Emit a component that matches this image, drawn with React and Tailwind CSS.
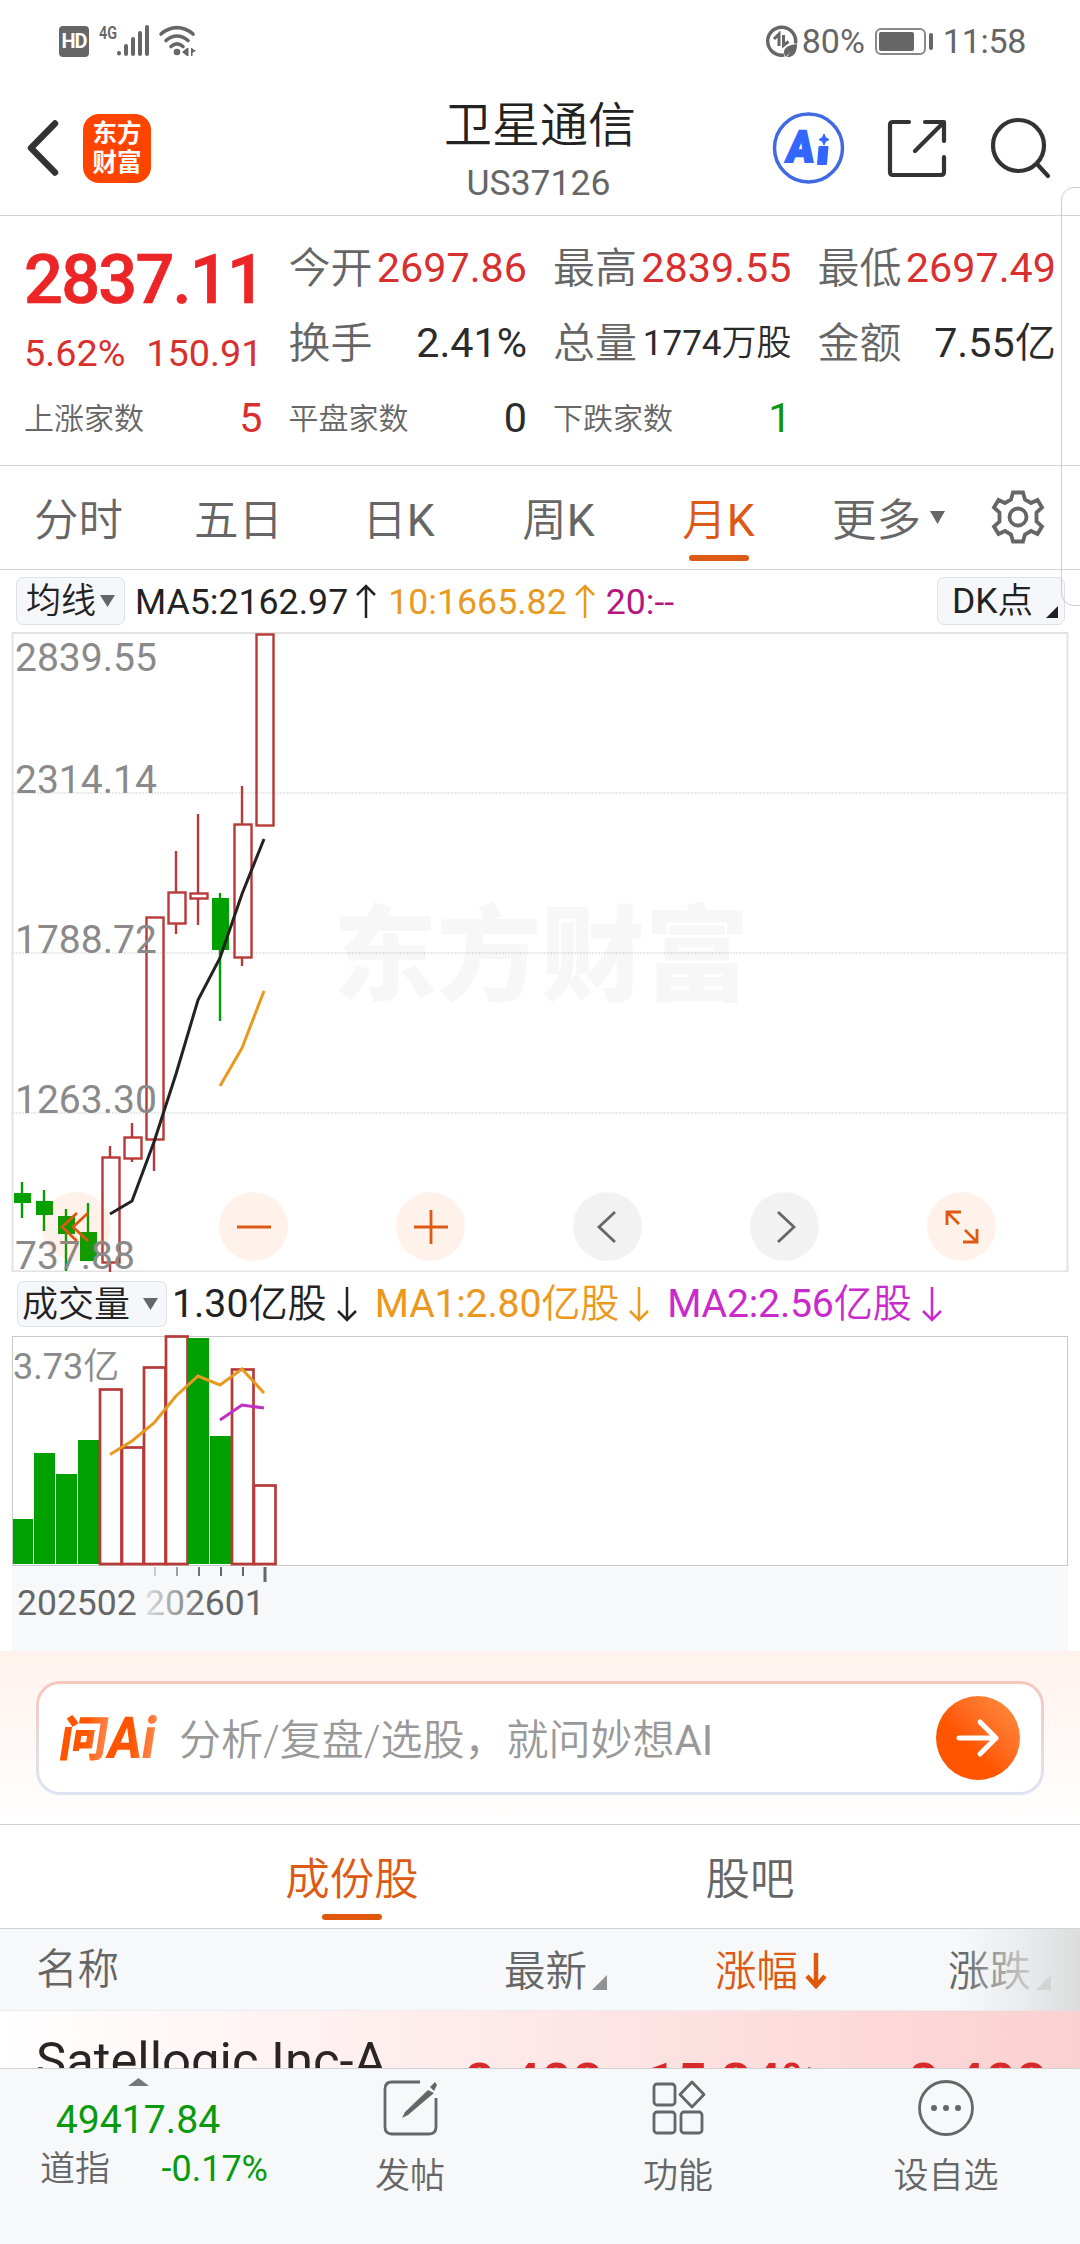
import React from 'react';

const RED = '#b83a38';
const GREEN = '#00a000';

// x = centre of the candle, wick = [high, low], body = [top, bottom]
const candles = [
    { x: 22, up: false, wick: [1182, 1218], body: [1193, 1203] },
    { x: 44, up: false, wick: [1190, 1231], body: [1201, 1215] },
    { x: 66, up: false, wick: [1209, 1271], body: [1216, 1234] },
    { x: 88, up: false, wick: [1203, 1261], body: [1232, 1261] },
    { x: 110, up: true, wick: [1146, 1272], body: [1157, 1262] },
    { x: 132, up: true, wick: [1123, 1162], body: [1137, 1158] },
    { x: 154, up: true, wick: [917, 1171], body: [917, 1139] },
    { x: 176, up: true, wick: [851, 934], body: [892, 923] },
    { x: 198, up: true, wick: [814, 925], body: [893, 898] },
    { x: 220, up: false, wick: [893, 1021], body: [898, 950] },
    { x: 242, up: true, wick: [786, 966], body: [824, 957] },
    { x: 264, up: true, wick: [634, 825], body: [634, 825] },
];

const volumes = [
    { up: false, top: 1519 },
    { up: false, top: 1453 },
    { up: false, top: 1474 },
    { up: false, top: 1440 },
    { up: true, top: 1388 },
    { up: true, top: 1446 },
    { up: true, top: 1366 },
    { up: true, top: 1335 },
    { up: false, top: 1338 },
    { up: false, top: 1436 },
    { up: true, top: 1368 },
    { up: true, top: 1484 },
];

const priceLabels = [
    { text: '2839.55', y: 671 },
    { text: '2314.14', y: 793 },
    { text: '1788.72', y: 953 },
    { text: '1263.30', y: 1113 },
    { text: '737.88', y: 1269 },
];

const tabs = [
    { name: '分时' },
    { name: '五日' },
    { name: '日', k: true },
    { name: '周', k: true },
    { name: '月', k: true, active: true },
];

const StatusBar = () => (
    <div className="h-[82px] flex items-center justify-between pl-[59px] pr-[54px] text-[#666]">
        <div className="flex items-center">
            <div className="w-[30px] h-[31px] rounded-[4px] bg-[#666] text-white text-[20px] font-bold flex items-center justify-center leading-none tracking-[-1px]">
                HD
            </div>
            <svg className="ml-[8px] overflow-visible" width="100" height="40" viewBox="97 21 100 40" fill="none">
                <text x="99" y="38.500" fontSize="19" fontWeight="600" fill="#666" textLength="18" lengthAdjust="spacingAndGlyphs">4G</text>
                <g stroke="#666" strokeWidth="4" strokeLinecap="round">
                    <path d="M119 53v.5M126 46v8M133 39v15M140 33v21M147 27v27" />
                </g>
                <g stroke="#666" strokeWidth="3.600" strokeLinecap="round">
                    <path d="M161 34c10-8.500 22-8.500 32 0M166 40.500c7-6 15-6 22 0M171 46.500c4-3.500 8-3.500 12 0" />
                </g>
                <circle cx="177" cy="52" r="3.300" fill="#666" />
                <path d="M182 52l5-4v8zM186.500 48h2v8h-2zM191 48h1.500v1l3.500 1.500-3.500 2.500v3H191z" fill="#666" />
            </svg>
        </div>
        <div className="flex items-center text-[34px] leading-none">
            <svg width="32" height="32" viewBox="0 0 32 32" fill="none">
                <path d="M29.500 18.500A14 14 0 1 0 18 30" stroke="#666" strokeWidth="3.400" />
                <path d="M8 14l5-5v12M17.500 10v10.500l5-4" stroke="#666" strokeWidth="3" />
                <path d="M31 19c-8 1-13 3-13 8.500 0 1.500.5 3 1.500 4.500l5-5-4 5.500C28 32 31 28 31 19z" fill="#666" />
            </svg>
            <span className="ml-[4px]">80%</span>
            <div className="ml-[10px] w-[51px] h-[27px] border-2 border-[#888] rounded-[6px] p-[2px]">
                <div className="h-full w-[35px] rounded-[2px] bg-[#666]" />
            </div>
            <div className="ml-[3px] w-[4px] h-[17px] rounded-[2px] bg-[#666]" />
            <span className="ml-[10px] tracking-[-0.300px]">11:58</span>
        </div>
    </div>
);

const NavBar = () => (
    <div className="h-[134px] flex items-center justify-between border-b border-[#d4d4d4] pl-[25px] pr-[28px] pb-px">
        <div className="flex items-center w-[250px]">
            <svg width="36" height="58" viewBox="0 0 36 58" fill="none" stroke="#333" strokeWidth="6.500" strokeLinecap="round" strokeLinejoin="round">
                <path d="M30 4.500L6 29l24 24.500" />
            </svg>
            <div className="ml-[22px] w-[68px] h-[69px] rounded-[16px] bg-[#ff4400] text-white text-[24.500px] font-bold leading-[29px] text-center pt-[5px]">
                东方<br />财富
            </div>
        </div>
        <div className="text-center pt-[4px] pl-[3px]">
            <div className="text-[48px] leading-[56px] font-[350] text-[#222]">卫星通信</div>
            <div className="text-[35.500px] leading-[40px] mt-[9px] text-[#666] -ml-[3px]">US37126</div>
        </div>
        <svg width="250" height="74" viewBox="802 111 250 74" className="overflow-visible" fill="none">
            <circle cx="808.500" cy="148" r="34" stroke="#4169e1" strokeWidth="3.500" />
            <g fill="#3366ff">
                <text x="0" y="0" fontSize="44" fontWeight="900" stroke="#3366ff" strokeWidth="2" transform="translate(785 162) skewX(-7) scale(0.92 1)">A</text>
                <path d="M819.500 147h8l-1.500 17h-8z" strokeWidth="2" strokeLinejoin="round" stroke="#3366ff" />
                <path d="M824 134l1.500 3.500 3.500 2-3.500 2-1.500 3.500-1.500-3.500-3.500-2 3.500-2z" stroke="#3366ff" />
            </g>
            <g stroke="#333" strokeWidth="4.200" strokeLinecap="round" strokeLinejoin="round">
                <path d="M909 122h-16q-3 0-3 3v47q0 3 3 3h48q3 0 3-3v-15M925 122h19v19M943 123l-28 28" />
                <circle cx="1018.500" cy="145.500" r="25.500" />
                <path d="M1037 164l11 12" />
            </g>
        </svg>
    </div>
);

const Stat = ({ label, value, color = 'text-[#2b2b2b]', small = false }) => (
    <div className="flex items-center justify-between whitespace-nowrap leading-none">
        <span className={small ? 'text-[30px] font-[350] text-[#666]' : 'text-[42px] font-[350] text-[#666]'}>{label}</span>
        <span className={color}>{value}</span>
    </div>
);

const Quote = () => (
    <div className="h-[250px] border-b border-[#d4d4d4] pt-[15px] px-[24px]">
        <div className="grid grid-cols-4 grid-rows-3 h-[225px] gap-x-[26px] text-[41.300px]">
            <div className="row-span-2 leading-none text-[#d8302f]">
                <div className="text-[68.500px] font-medium text-[#ec2527] tracking-[-1.800px] mt-[15px] [-webkit-text-stroke:0.700px_#ec2527]">2837.11</div>
                <div className="flex justify-between text-[37.800px] mt-[20px]">
                    <span>5.62%</span>
                    <span>150.91</span>
                </div>
            </div>
            <Stat label="今开" value="2697.86" color="text-[#d8302f]" />
            <Stat label="最高" value="2839.55" color="text-[#d8302f]" />
            <Stat label="最低" value="2697.49" color="text-[#d8302f]" />
            <Stat label="换手" value="2.41%" />
            <Stat label="总量" value={<>1774<span className="font-[350]">万股</span></>} color="text-[35px] text-[#2b2b2b]" />
            <Stat label="金额" value={<>7.55<span className="font-[350]">亿</span></>} />
            <Stat label="上涨家数" value="5" color="text-[#d8302f]" small />
            <Stat label="平盘家数" value="0" small />
            <Stat label="下跌家数" value="1" color="text-[#0f960f]" small />
        </div>
    </div>
);

const PeriodTabs = () => (
    <div className="h-[104px] flex border-b border-[#d4d4d4] text-[44.500px] leading-none font-[350] text-[#666] pr-px">
        {tabs.map((tab) => (
            <div key={tab.name} className={`w-[160px] flex flex-col items-center pt-[33px] pr-[3px] ${tab.active ? 'text-[#dc5a14]' : ''}`}>
                <span className="h-[44px]">{tab.name}{tab.k && <span className="font-normal">K</span>}</span>
                {tab.active && <div className="mt-[12px] w-[60px] h-[6px] rounded-full bg-[#dc5a14]" />}
            </div>
        ))}
        <div className="w-[177px] flex justify-center gap-[9px] pt-[33px]">
            <span>更多</span>
            <svg className="mt-[12px]" width="15" height="13" viewBox="0 0 15 13"><path d="M0 0h15l-7.500 13z" fill="#666" /></svg>
        </div>
        <svg className="ml-[14px] mt-[24px]" width="54" height="54" viewBox="-27 -27 54 54" fill="none" stroke="#666" strokeWidth="3.800">
            <circle r="8.500" />
            <path d="M-5 -24.500H5L7 -17.500L13 -14L19.500 -17L24 -9.500L18.500 -4.500V4.500L24 9.500L19.500 17L13 14L7 17.500L5 24.500H-5L-7 17.500L-13 14L-19.500 17L-24 9.500L-18.500 4.500V-4.500L-24 -9.500L-19.500 -17L-13 -14L-7 -17.500Z" />
        </svg>
    </div>
);

const Arrow = ({ down = false, className }) => (
    <svg className={className} width="20" height="36" viewBox="0 0 20 36" fill="none" stroke="currentColor" strokeWidth="2.500">
        <path d={down ? 'M10 1v33M1 25l9 9 9-9' : 'M10 35V3M1 12l9-9 9 9'} />
    </svg>
);

const Caret = () => (
    <svg width="15" height="12" viewBox="0 0 15 12"><path d="M0 0h15l-7.500 12z" fill="#666" /></svg>
);

const MaBar = () => (
    <div className="h-[62px] flex items-center pl-[16px] pr-[15px] text-[35.700px] leading-none whitespace-nowrap">
        <div className="w-[109px] h-[48px] rounded-[7px] border border-[#dde1e6] bg-[#f6f7fa] flex items-center pl-[9px] gap-[4px] text-[35px] text-[#222]">
            <span className="font-[350] pt-px">均线</span>
            <Caret />
        </div>
        <span className="ml-[10px] pt-[3px] text-[#222]">MA5:2162.97</span>
        <Arrow className="ml-[8px] text-[#222]" />
        <span className="ml-[12px] pt-[3px] text-[#e8991f]">10:1665.82</span>
        <Arrow className="ml-[8px] text-[#e8991f]" />
        <span className="ml-[11px] pt-[3px] text-[#b5177f]">20:--</span>
        <div className="ml-auto w-[128px] h-[48px] rounded-[7px] border border-[#dde1e6] bg-[#f6f7fa] flex items-center justify-between pl-[14px] pr-[6px] text-[35.500px] text-[#222]">
            <span className="pt-[2px]">DK<span className="font-[350]">点</span></span>
            <svg className="mt-[22px]" width="12" height="12" viewBox="0 0 12 12"><path d="M12 0v12H0z" fill="#222" /></svg>
        </div>
    </div>
);

const RoundButton = ({ gray = false, children }) => (
    <div className={`w-[69px] h-[69px] rounded-full flex items-center justify-center ${gray ? 'bg-black/5 text-[#666]' : 'bg-[#ff5500]/8 text-[#dc5a14]'}`}>
        <svg width="36" height="36" viewBox="-18 -18 36 36" fill="none" stroke="currentColor" strokeWidth="2.800">
            {children}
        </svg>
    </div>
);

const PriceChart = () => (
    <div className="relative h-[640px]">
        <svg className="block" width="1080" height="640" viewBox="0 632 1080 640">
            <g stroke="#e4e4e4" strokeWidth="1.500" strokeDasharray="2 1">
                <path d="M13 793H1067M13 953H1067M13 1113H1067" />
            </g>
            <text x="333" y="993" fontSize="104" fontWeight="900" fill="#000" opacity="0.028">东方财富</text>
            <rect x="12.500" y="633" width="1055" height="638.500" fill="none" stroke="#e3e3e3" strokeWidth="2" />
            {candles.map((c) => (
                <g key={c.x}>
                    <path
                        d={c.up
                            ? `M${c.x} ${c.wick[0]}V${c.body[0]}M${c.x} ${c.body[1]}V${c.wick[1]}`
                            : `M${c.x} ${c.wick[0]}V${c.wick[1]}`}
                        stroke={c.up ? RED : GREEN}
                        strokeWidth="2.400"
                    />
                    <rect
                        x={c.up ? c.x - 7.5 : c.x - 8}
                        y={c.up ? c.body[0] + 0.5 : c.body[0]}
                        width="17"
                        height={c.body[1] - c.body[0]}
                        fill={c.up ? 'none' : GREEN}
                        stroke={c.up ? RED : 'none'}
                        strokeWidth="2.400"
                    />
                </g>
            ))}
            <path d="M110 1214L132 1201L154 1142L176 1074L198 1000L220 958L242 894L264 839" fill="none" stroke="#222" strokeWidth="3" />
            <path d="M220 1086L242 1048L264 991" fill="none" stroke="#e8991f" strokeWidth="3" />
            {priceLabels.map((l) => (
                <text key={l.text} x="15" y={l.y} fontSize="39" fill="#8a8a8a">{l.text}</text>
            ))}
        </svg>
        <div className="absolute left-[42px] top-[560px] w-[954px] flex justify-between">
            <RoundButton><path d="M0 -14L-15 0L0 14M11 -14L-4 0L11 14" /></RoundButton>
            <RoundButton><path d="M-17 0H17" /></RoundButton>
            <RoundButton><path d="M-17 0H17M0 -17V17" /></RoundButton>
            <RoundButton gray><path d="M7 -15L-9 0L7 15" /></RoundButton>
            <RoundButton gray><path d="M-7 -15L9 0L-7 15" /></RoundButton>
            <RoundButton><path d="M-1 -15H-15V-2M-15 -15L-3 -3M1 15H15V2M15 15L3 3" /></RoundButton>
        </div>
    </div>
);

const VolumeBar = () => (
    <div className="h-[63px] flex items-center pl-[17px] pt-px text-[39.200px] leading-none whitespace-nowrap">
        <div className="w-[150px] h-[46px] rounded-[7px] border border-[#dde1e6] bg-[#f6f7fa] flex items-center justify-between pl-[4px] pr-[8px] text-[36px] font-[350] text-[#222]">
            <span className="pt-[2px]">成交量</span>
            <Caret />
        </div>
        <span className="ml-[5px] pt-[2px] text-[#222]">1.30<span className="font-[350]">亿股</span></span>
        <Arrow down className="ml-[10px] text-[#222]" />
        <span className="ml-[18px] pt-[2px] text-[#eb981c] tracking-[-0.200px]">MA1:2.80<span className="font-[350]">亿股</span></span>
        <Arrow down className="ml-[10px] text-[#eb981c]" />
        <span className="ml-[18px] pt-[2px] text-[#c92bcb] tracking-[-0.200px]">MA2:2.56<span className="font-[350]">亿股</span></span>
        <Arrow down className="ml-[10px] text-[#c92bcb]" />
    </div>
);

const VolumeChart = () => (
    <svg className="block" width="1080" height="316" viewBox="0 1335 1080 316">
        <defs>
            <linearGradient id="dateFade" gradientUnits="userSpaceOnUse" x1="140" x2="205" y1="0" y2="0">
                <stop offset="0" stopColor="#666" stopOpacity="0.1" />
                <stop offset="1" stopColor="#666" />
            </linearGradient>
        </defs>
        <rect x="12" y="1567" width="1056" height="84" fill="#f7f8fa" />
        <rect x="12.500" y="1336.500" width="1055" height="229" fill="none" stroke="#c9c9c9" />
        <text x="13" y="1379" fontSize="36" fill="#8a8a8a">3.73<tspan fontWeight="350">亿</tspan></text>
        {volumes.map((v, i) => (
            v.up
                ? <rect key={i} x={i * 22 + 12} y={v.top + 1.5} width="21.500" height={1562.5 - v.top} fill="#fff" stroke={RED} strokeWidth="2.700" />
                : <rect key={i} x={i * 22 + (i ? 12 : 13)} y={v.top} width={i ? 21 : 20} height={1564 - v.top} fill={GREEN} />
        ))}
        <path d="M110 1454.500L132 1441L154 1423L176 1396L198 1376L220 1385L242 1369L264 1393" fill="none" stroke="#e8991f" strokeWidth="3" />
        <path d="M220 1420L242 1405L264 1408" fill="none" stroke="#c22fc4" strokeWidth="3" />
        <g fill="url(#dateFade)">
            <path d="M154 1567h2v9h-2zM176 1567h2v9h-2zM198 1567h2v9h-2zM220 1567h2v9h-2zM242 1567h2v9h-2zM263.500 1567h3v15h-3z" />
            <text x="145" y="1615" fontSize="35.500">202601</text>
        </g>
        <text x="17" y="1615" fontSize="35.500" fill="#666">202502</text>
    </svg>
);

const AskAi = () => (
    <div className="h-[174px] border-b border-[#d4d4d4] bg-linear-to-b from-[#fff2ed] to-white pt-[30px] px-[36px]">
        <div className="h-[114px] rounded-[24px] bg-linear-to-b from-[#f5c6bd] to-[#dde5f3] p-[3px]">
            <div className="h-full rounded-[21px] bg-white flex items-center pl-[20px] pr-[21px]">
                <svg className="overflow-visible" width="100" height="60" viewBox="0 -7 100 60">
                    <defs>
                        <linearGradient id="askFill" x1="0" x2="1" y1="0" y2="0">
                            <stop offset="0.500" stopColor="#ff5500" />
                            <stop offset="1" stopColor="#ff8a50" />
                        </linearGradient>
                    </defs>
                    <g fill="url(#askFill)" transform="skewX(-9)">
                        <text x="5" y="41" fontSize="48" fontWeight="900">问</text>
                        <text x="53" y="43" fontSize="58" fontWeight="800" textLength="48" lengthAdjust="spacingAndGlyphs">Ai</text>
                    </g>
                </svg>
                <span className="ml-[20px] pt-[5px] text-[42px] leading-none font-[350] text-[#999] whitespace-nowrap">分析/复盘/选股，就问妙想<span className="font-normal">AI</span></span>
                <div className="ml-auto w-[84px] h-[84px] rounded-full bg-linear-to-tr from-[#ff5500] from-40% to-[#ff9040] flex items-center justify-center">
                    <svg width="44" height="40" viewBox="0 0 44 40" fill="none" stroke="#fff" strokeWidth="5" strokeLinecap="round" strokeLinejoin="round">
                        <path d="M3 20h37M24 4l16 16-16 16" />
                    </svg>
                </div>
            </div>
        </div>
    </div>
);

const Corner = () => (
    <svg className="mt-[22px] ml-[5px]" width="15" height="15" viewBox="0 0 15 15"><path d="M15 0v15H0z" fill="#929292" /></svg>
);

const Constituents = () => (
    <>
        <div className="h-[104px] flex border-b border-[#d0d3d6] text-[44.500px] leading-none font-[350] pl-[153px] pr-[131px]">
            <div className="flex-1 flex flex-col items-center pt-[33px] text-[#dc5a14]">
                <span className="h-[44px]">成份股</span>
                <div className="mt-[12px] w-[60px] h-[6px] rounded-[3px] bg-[#e0580c]" />
            </div>
            <div className="flex-1 flex flex-col items-center pt-[33px] text-[#666]">股吧</div>
        </div>
        <div className="relative h-[82px] flex items-center bg-[#f6f8fa] border-b border-[#ececee] pl-[36px] text-[41.500px] leading-none font-[350] text-[#666]">
            <span className="w-[468px]">名称</span>
            <div className="w-[211px] flex items-center pt-[4px]">最新<Corner /></div>
            <div className="w-[233px] flex items-center pt-[4px] text-[#dc5a14]">
                涨幅
                <svg className="ml-[7px] -mt-[2px]" width="22" height="36" viewBox="0 0 22 36" fill="none" stroke="#e0580c" strokeWidth="4.500">
                    <path d="M11 0v33M2 23l9 10 9-10" />
                </svg>
            </div>
            <div className="flex items-center pt-[4px]">涨跌<Corner /></div>
            <div className="absolute right-0 top-0 w-[120px] h-[82px] bg-linear-to-r from-[#f6f8fa]/0 via-[#e6e7e8]/70 to-[#dcdcdc]" />
        </div>
        <div className="h-[57px] overflow-hidden flex bg-linear-to-r from-white to-[#fbd0d0] text-[54.500px] leading-none pl-[36px] whitespace-nowrap">
            <span className="w-[428px] pt-[25px] text-[50.800px] text-[#2b2424]">Satellogic Inc-A</span>
            <span className="w-[182px] pt-[44px] font-medium text-[#d8282a]">8.408</span>
            <span className="w-[262px] pt-[44px] font-medium text-[#d8282a] tracking-[-0.800px]">15.34%</span>
            <span className="pt-[44px] font-medium text-[#d8282a]">8.408</span>
        </div>
    </>
);

const NavItem = ({ label, children }) => (
    <div className="flex-1 flex flex-col items-center pt-[9px] text-[35px] leading-none font-[350] text-[#666]">
        <svg width="60" height="60" viewBox="-30 -30 60 60" fill="none" stroke="#666" strokeWidth="2.800" strokeLinejoin="round">
            {children}
        </svg>
        <span className="mt-[21px]">{label}</span>
    </div>
);

const BottomBar = () => (
    <div className="h-[176px] flex bg-[#f6f8fa] border-t border-[#d0d3d6]">
        <div className="w-[276px] pt-[9px] leading-none text-[#0a9a10]">
            <svg className="block ml-[128px]" width="21" height="8" viewBox="0 0 21 8"><path d="M10.500 0L21 8H0z" fill="#777" /></svg>
            <div className="text-center text-[39.200px] mt-[15px]">49417.84</div>
            <div className="flex items-center justify-between pl-[40px] pr-[8px] mt-[11px]">
                <span className="text-[35px] font-[350] text-[#666]">道指</span>
                <span className="text-[36px]">-0.17%</span>
            </div>
        </div>
        <NavItem label="发帖">
            <path d="M10 -26H-18q-7 0-7 7V19q0 7 7 7H19q7 0 7-7V-10" />
            <path d="M18 -18L-5 4l-3 6 6-3L24 -15zM20 -21l5-5 2 3-3 6z" fill="#666" stroke="none" />
        </NavItem>
        <NavItem label="功能">
            <rect x="-24" y="-24" width="21" height="21" rx="3" />
            <rect x="-24" y="4" width="21" height="21" rx="3" />
            <rect x="3" y="4" width="21" height="21" rx="3" />
            <path d="M14 -26L26 -13.500L14 -1L2 -13.500Z" />
        </NavItem>
        <NavItem label="设自选">
            <circle r="26.500" />
            <g fill="#666" stroke="none">
                <circle cx="-12" r="3" />
                <circle r="3" />
                <circle cx="12" r="3" />
            </g>
        </NavItem>
    </div>
);

const App = () => {
    return (
        <div className="relative w-[1080px] h-[2244px] overflow-hidden bg-white font-[Roboto,'Noto_Sans_CJK_SC',sans-serif]">
            <StatusBar />
            <NavBar />
            <Quote />
            <PeriodTabs />
            <MaBar />
            <PriceChart />
            <VolumeBar />
            <VolumeChart />
            <AskAi />
            <Constituents />
            <BottomBar />

            {/* Edge of the system side panel */}
            <div className="absolute left-[1061px] top-[187px] w-[40px] h-[419px] rounded-[13px] border border-[#ccc]" />
        </div>
    );
};

export default App;
